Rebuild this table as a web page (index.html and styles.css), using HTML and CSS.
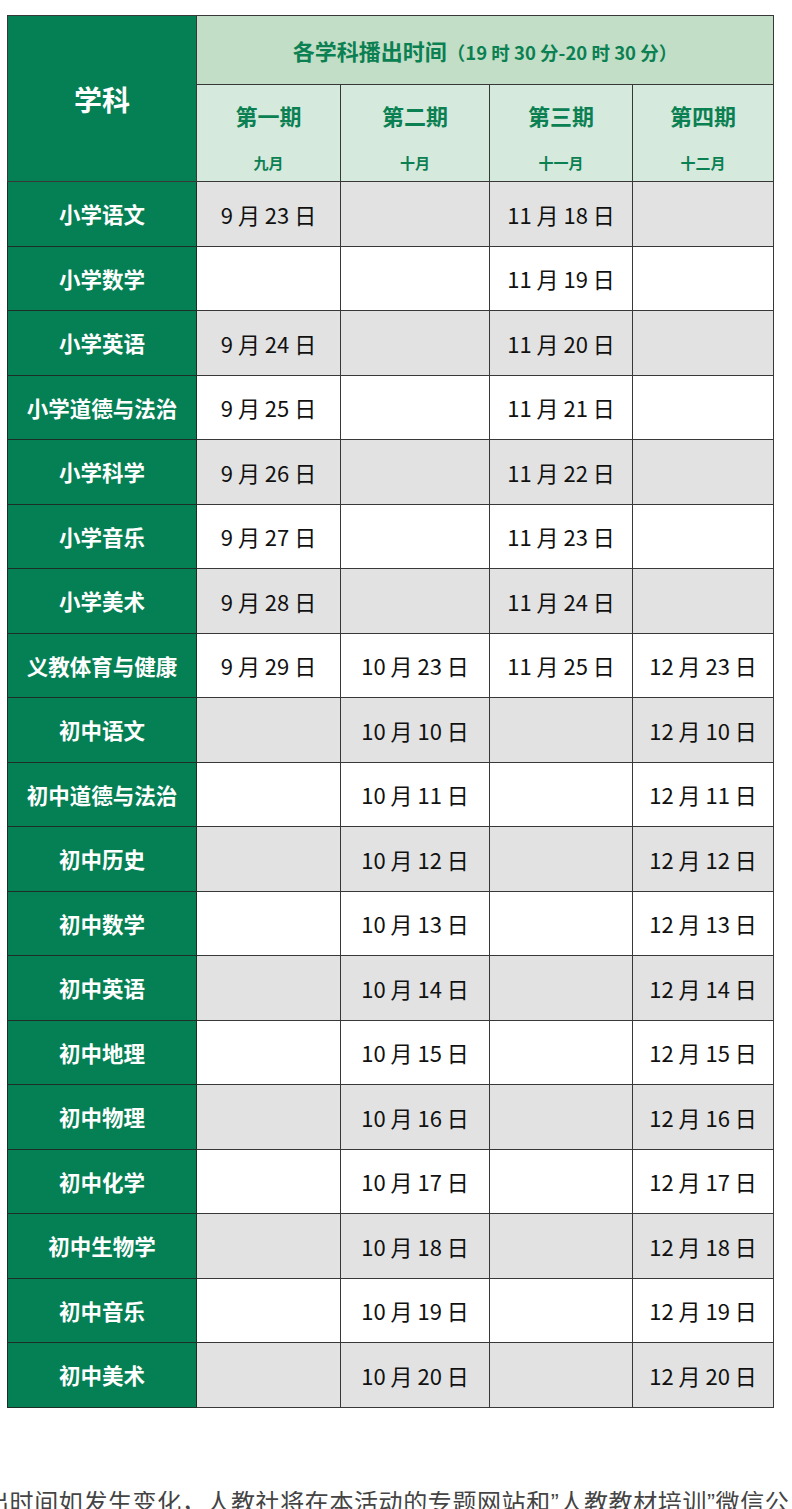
FILE: index.html
```html
<!DOCTYPE html>
<html lang="zh-CN">
<head>
<meta charset="utf-8">
<title>各学科播出时间</title>
<link rel="stylesheet" href="styles.css">
</head>
<body>
<table class="schedule">
  <colgroup>
    <col class="c-subj"><col class="c-p1"><col class="c-p2"><col class="c-p3"><col class="c-p4">
  </colgroup>
  <thead>
    <tr class="h1">
      <th rowspan="2" class="subj-head">学科</th>
      <th colspan="4" class="title">各学科播出时间<span class="sub">（19 时 30 分-20 时 30 分）</span></th>
    </tr>
    <tr class="h2">
      <th class="period"><div class="pname">第一期</div><div class="pmonth">九月</div></th>
      <th class="period"><div class="pname">第二期</div><div class="pmonth">十月</div></th>
      <th class="period"><div class="pname">第三期</div><div class="pmonth">十一月</div></th>
      <th class="period"><div class="pname">第四期</div><div class="pmonth">十二月</div></th>
    </tr>
  </thead>
  <tbody>
    <tr class="odd"><th>小学语文</th><td>9 月 23 日</td><td></td><td>11 月 18 日</td><td></td></tr>
    <tr><th>小学数学</th><td></td><td></td><td>11 月 19 日</td><td></td></tr>
    <tr class="odd"><th>小学英语</th><td>9 月 24 日</td><td></td><td>11 月 20 日</td><td></td></tr>
    <tr><th>小学道德与法治</th><td>9 月 25 日</td><td></td><td>11 月 21 日</td><td></td></tr>
    <tr class="odd"><th>小学科学</th><td>9 月 26 日</td><td></td><td>11 月 22 日</td><td></td></tr>
    <tr><th>小学音乐</th><td>9 月 27 日</td><td></td><td>11 月 23 日</td><td></td></tr>
    <tr class="odd"><th>小学美术</th><td>9 月 28 日</td><td></td><td>11 月 24 日</td><td></td></tr>
    <tr><th>义教体育与健康</th><td>9 月 29 日</td><td>10 月 23 日</td><td>11 月 25 日</td><td>12 月 23 日</td></tr>
    <tr class="odd"><th>初中语文</th><td></td><td>10 月 10 日</td><td></td><td>12 月 10 日</td></tr>
    <tr><th>初中道德与法治</th><td></td><td>10 月 11 日</td><td></td><td>12 月 11 日</td></tr>
    <tr class="odd"><th>初中历史</th><td></td><td>10 月 12 日</td><td></td><td>12 月 12 日</td></tr>
    <tr><th>初中数学</th><td></td><td>10 月 13 日</td><td></td><td>12 月 13 日</td></tr>
    <tr class="odd"><th>初中英语</th><td></td><td>10 月 14 日</td><td></td><td>12 月 14 日</td></tr>
    <tr><th>初中地理</th><td></td><td>10 月 15 日</td><td></td><td>12 月 15 日</td></tr>
    <tr class="odd"><th>初中物理</th><td></td><td>10 月 16 日</td><td></td><td>12 月 16 日</td></tr>
    <tr><th>初中化学</th><td></td><td>10 月 17 日</td><td></td><td>12 月 17 日</td></tr>
    <tr class="odd"><th>初中生物学</th><td></td><td>10 月 18 日</td><td></td><td>12 月 18 日</td></tr>
    <tr><th>初中音乐</th><td></td><td>10 月 19 日</td><td></td><td>12 月 19 日</td></tr>
    <tr class="odd"><th>初中美术</th><td></td><td>10 月 20 日</td><td></td><td>12 月 20 日</td></tr>
  </tbody>
</table>
<div class="note-wrap">
  <p class="note">出时间如发生变化，人教社将在本活动的专题网站和”人教教材培训”微信公</p>
</div>
</body>
</html>
```
FILE: styles.css
```css
html, body {
  margin: 0;
  padding: 0;
  background: #ffffff;
}
body {
  width: 792px;
  overflow: hidden;
  font-family: "Noto Sans CJK SC", "Noto Sans", sans-serif;
}
.schedule {
  margin: 15px 0 0 7px;
  width: 766px;
  border-collapse: collapse;
  table-layout: fixed;
}
.c-subj { width: 189px; }
.c-p1 { width: 144px; }
.c-p2 { width: 149px; }
.c-p3 { width: 143px; }
.c-p4 { width: 141px; }

.schedule th,
.schedule td {
  border: 1px solid #383838;
  padding: 0;
  text-align: center;
  vertical-align: middle;
}
.h1 { height: 69px; }
.h2 { height: 97px; }
.schedule tbody tr { height: 64.5px; }

.subj-head {
  background: #058055;
  color: #ffffff;
  font-size: 28px;
  font-weight: 700;
  border-bottom-color: #9aa8a0;
  padding-bottom: 3px;
}
.title {
  background: #c2dec6;
  color: #0b8052;
  font-size: 22px;
  font-weight: 700;
  border-right-color: #8a9a8e;
  border-top-color: #777;
}
.title .sub {
  font-size: 18.5px;
  font-weight: 700;
}
.period {
  background: #d5e9dd;
  color: #0b8052;
  font-weight: 700;
}
.pname {
  font-size: 22px;
  line-height: 30px;
  margin-top: 6px;
}
.pmonth {
  font-size: 15px;
  line-height: 20px;
  margin-top: 23px;
}
.schedule tbody th {
  background: #058055;
  color: #ffffff;
  font-size: 21.5px;
  font-weight: 700;
  border-color: #1d2e26;
}
.schedule tbody td {
  color: #111111;
  font-size: 22px;
  font-weight: 400;
  background: #ffffff;
}
.schedule tbody tr.odd td {
  background: #e2e2e2;
}
.note-wrap {
  margin-top: 83px;
  width: 792px;
  overflow: hidden;
}
.note {
  margin: 0 0 0 -15px;
  white-space: nowrap;
  font-family: "Liberation Sans", "Noto Sans CJK SC", sans-serif;
  font-size: 24px;
  line-height: 24px;
  letter-spacing: 0.6px;
  color: #444444;
}
```
